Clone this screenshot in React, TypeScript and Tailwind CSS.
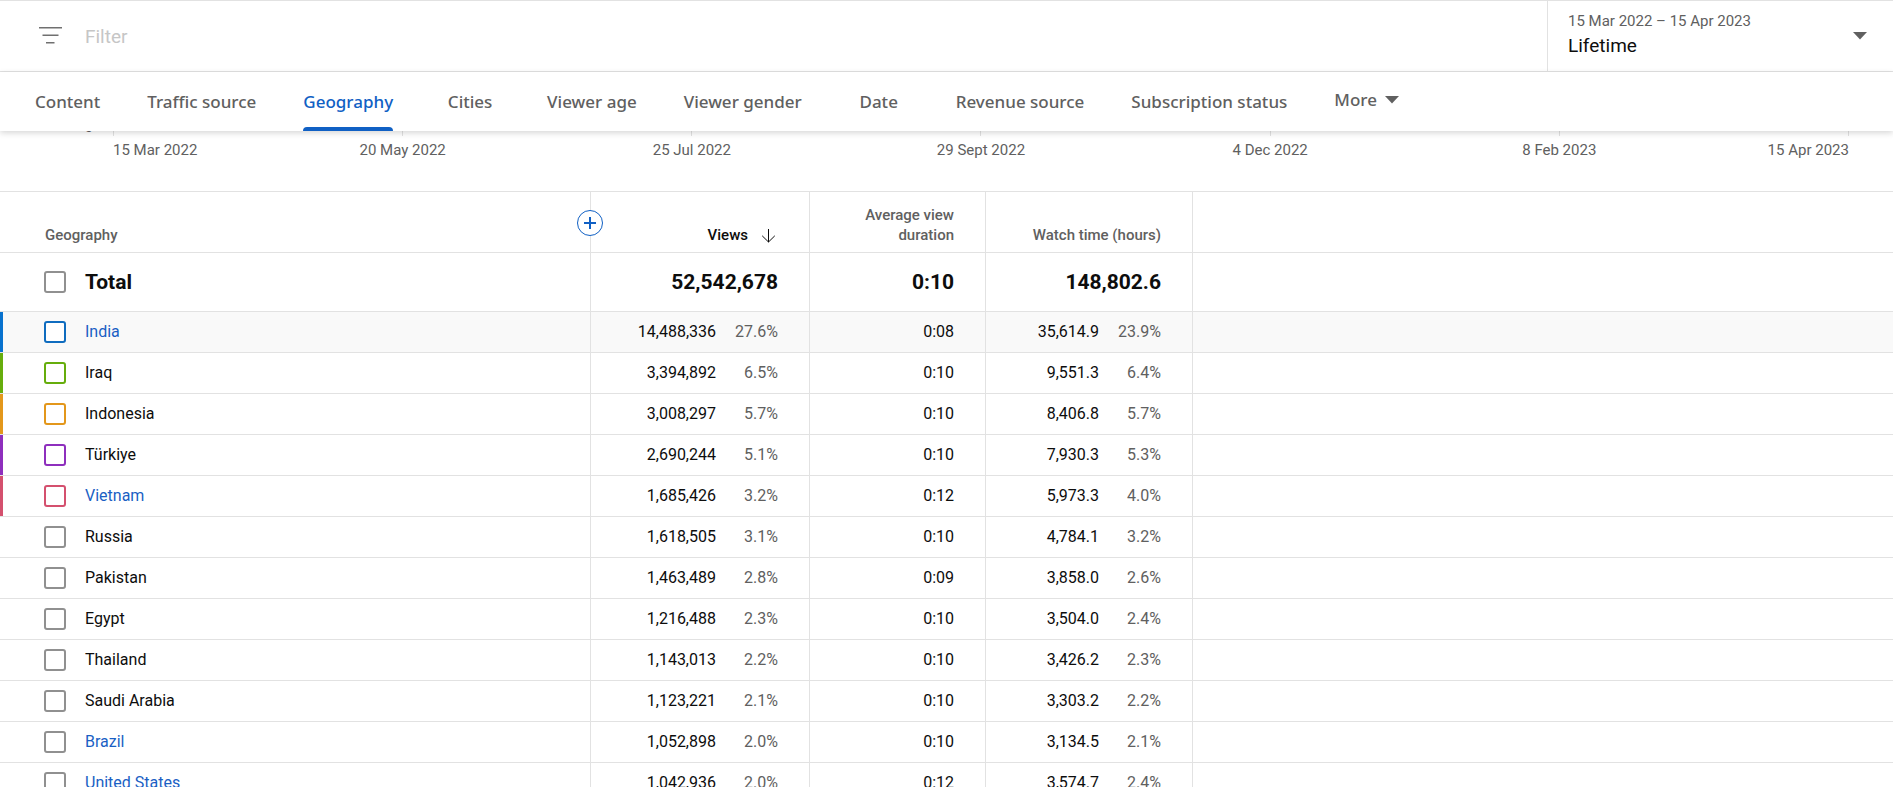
import clsx from "clsx";

const tabs = [
  "Content",
  "Traffic source",
  "Geography",
  "Cities",
  "Viewer age",
  "Viewer gender",
  "Date",
  "Revenue source",
  "Subscription status",
];

const axisDates = [
  "15 Mar 2022",
  "20 May 2022",
  "25 Jul 2022",
  "29 Sept 2022",
  "4 Dec 2022",
  "8 Feb 2023",
  "15 Apr 2023",
];

type Row = {
  name: string;
  views: string;
  viewsPct: string;
  duration: string;
  hours: string;
  hoursPct: string;
  link?: boolean;
  active?: boolean;
  bar?: string;
  box?: string;
};

const rows: Row[] = [
  { name: "India", views: "14,488,336", viewsPct: "27.6%", duration: "0:08", hours: "35,614.9", hoursPct: "23.9%", link: true, active: true, bar: "bg-[#0872ce]", box: "border-[#0f6cbf]" },
  { name: "Iraq", views: "3,394,892", viewsPct: "6.5%", duration: "0:10", hours: "9,551.3", hoursPct: "6.4%", bar: "bg-[#66ad0c]", box: "border-[#66ad0c]" },
  { name: "Indonesia", views: "3,008,297", viewsPct: "5.7%", duration: "0:10", hours: "8,406.8", hoursPct: "5.7%", bar: "bg-[#e3971b]", box: "border-[#e3971b]" },
  { name: "Türkiye", views: "2,690,244", viewsPct: "5.1%", duration: "0:10", hours: "7,930.3", hoursPct: "5.3%", bar: "bg-[#8e2fbd]", box: "border-[#8e2fbd]" },
  { name: "Vietnam", views: "1,685,426", viewsPct: "3.2%", duration: "0:12", hours: "5,973.3", hoursPct: "4.0%", link: true, bar: "bg-[#d4506e]", box: "border-[#d4506e]" },
  { name: "Russia", views: "1,618,505", viewsPct: "3.1%", duration: "0:10", hours: "4,784.1", hoursPct: "3.2%" },
  { name: "Pakistan", views: "1,463,489", viewsPct: "2.8%", duration: "0:09", hours: "3,858.0", hoursPct: "2.6%" },
  { name: "Egypt", views: "1,216,488", viewsPct: "2.3%", duration: "0:10", hours: "3,504.0", hoursPct: "2.4%" },
  { name: "Thailand", views: "1,143,013", viewsPct: "2.2%", duration: "0:10", hours: "3,426.2", hoursPct: "2.3%" },
  { name: "Saudi Arabia", views: "1,123,221", viewsPct: "2.1%", duration: "0:10", hours: "3,303.2", hoursPct: "2.2%" },
  { name: "Brazil", views: "1,052,898", viewsPct: "2.0%", duration: "0:10", hours: "3,134.5", hoursPct: "2.1%", link: true },
  { name: "United States", views: "1,042,936", viewsPct: "2.0%", duration: "0:12", hours: "3,574.7", hoursPct: "2.4%", link: true },
];

function Caret() {
  return (
    <svg className="w-3.5 h-2 shrink-0" viewBox="0 0 14 8" fill="#606060">
      <path d="M0 0h14L7 7.5z" />
    </svg>
  );
}

function Checkbox({ id, color }: { id: string; color?: string }) {
  return (
    <input
      id={id}
      type="checkbox"
      className={clsx(
        "appearance-none block w-[22px] h-[22px] shrink-0 border-2 rounded-[3px] bg-white",
        color ?? "border-[#909090]"
      )}
    />
  );
}

function FilterBar() {
  return (
    <div className="flex h-[72px] border-y border-[#e2e2e2]">
      <div className="flex flex-1 items-center pl-[39px]">
        <svg className="w-[23px] h-[18px] shrink-0" viewBox="0 0 23 18" fill="#707070">
          <path d="M0 0h23v1.6H0zM3.5 7.5h16v1.6h-16zM7 15h8.5v1.6H7z" />
        </svg>
        <input
          type="text"
          placeholder="Filter"
          aria-label="Filter"
          className="flex-1 ml-[23px] pt-0.5 text-[19px] leading-6 text-[#0d0d0d] placeholder:text-[#c6c6c6] outline-none"
        />
      </div>
      <button className="flex w-[346px] items-center justify-between border-l border-[#e2e2e2] pl-5 pr-[26px] text-left">
        <span className="pb-1">
          <span className="block text-[15px] leading-6 text-[#606060]">15 Mar 2022 – 15 Apr 2023</span>
          <span className="block text-[19px] leading-[26px] text-[#0d0d0d]">Lifetime</span>
        </span>
        <Caret />
      </button>
    </div>
  );
}

function TabBar() {
  return (
    <nav className="relative z-10 flex h-[59px] gap-[47px] bg-white pl-[35px] font-['Noto_Sans',sans-serif] text-[17px] font-medium text-[#606060] shadow-[0_2px_6px_rgba(0,0,0,0.16)]">
      {tabs.map((tab) => {
        const selected = tab === "Geography";
        return (
          <button
            key={tab}
            className={clsx(
              "flex flex-col items-center min-w-[60px] whitespace-nowrap pt-[18px] leading-6",
              selected && "text-[#1060c4]"
            )}
          >
            <span>{tab}</span>
            {selected && <span className="mt-auto h-1 w-full rounded-t bg-[#1060c4]" />}
          </button>
        );
      })}
      <button className="flex items-center gap-2 pb-1">
        More
        <Caret />
      </button>
    </nav>
  );
}

function ChartAxis() {
  return (
    <div className="flex h-[60px] text-[15px] text-[#606060]">
      <span className="-mt-3 w-[93px] text-right text-[15px] leading-4">0</span>
      <div className="ml-5 mr-11 flex flex-1 justify-between">
        {axisDates.map((date, i) => (
          <div
            key={date}
            className={clsx(
              "flex w-px flex-col whitespace-nowrap",
              i === 0 && "items-start",
              i > 0 && i < axisDates.length - 1 && "items-center",
              i === axisDates.length - 1 && "items-end"
            )}
          >
            <span className="h-[5px] w-px bg-[#e2e2e2]" />
            <span className="mt-1 leading-5">{date}</span>
          </div>
        ))}
      </div>
    </div>
  );
}

const cell = "border-r border-[#e2e2e2] pr-[31px] text-right";

function GeographyTable() {
  return (
    <table className="w-full table-fixed border-separate border-spacing-0 border-t border-[#e2e2e2] text-[16px] text-[#0d0d0d] [&_td]:border-b [&_th]:border-b [&_td]:border-[#e2e2e2] [&_th]:border-[#e2e2e2]">
      <colgroup>
        <col className="w-[591px]" />
        <col className="w-[219px]" />
        <col className="w-[176px]" />
        <col className="w-[207px]" />
        <col />
      </colgroup>
      <thead>
        <tr className="h-[61px] align-bottom text-[15px] leading-5 text-[#606060]">
          <th scope="col" className="relative border-r pb-[7px] pl-[45px] text-left font-medium">
            Geography
            <button
              aria-label="Add metric"
              className="absolute -right-[13px] top-[18px] flex h-[26px] w-[26px] items-center justify-center rounded-full border border-[#1060c4] bg-white"
            >
              <svg className="w-3 h-3" viewBox="0 0 12 12" fill="none" stroke="#1060c4" strokeWidth="2">
                <path d="M6 0v12M0 6h12" />
              </svg>
            </button>
          </th>
          <th scope="col" className={clsx(cell, "pb-[7px] font-medium")}>
            <button className="inline-flex items-center gap-[13px] text-[#0d0d0d]">
              Views
              <svg className="w-[15px] h-[15px] mr-[2px]" viewBox="0 0 15 15" fill="none" stroke="#0d0d0d">
                <path d="M7.5 1v13M1.2 7.8l6.3 6.2 6.3-6.2" />
              </svg>
            </button>
          </th>
          <th scope="col" className={clsx(cell, "pb-[7px] pl-10 font-medium")}>
            Average view duration
          </th>
          <th scope="col" className={clsx(cell, "pb-[7px] font-medium")}>
            Watch time (hours)
          </th>
          <td />
        </tr>
      </thead>
      <tbody>
        <tr className="h-[59px] text-[21px] leading-7 font-bold">
          <td className="border-r pl-11">
            <div className="flex items-center gap-[19px]">
              <Checkbox id="row-total" />
              <label htmlFor="row-total">Total</label>
            </div>
          </td>
          <td className={cell}>52,542,678</td>
          <td className={cell}>0:10</td>
          <td className={cell}>148,802.6</td>
          <td />
        </tr>
        {rows.map((row, i) => (
          <tr key={row.name} className={clsx("h-[41px]", row.active && "bg-[#f9f9f9]")}>
            <td className="border-r">
              <div className="flex h-10 items-center">
                <span className={clsx("mr-[41px] w-[3px] self-stretch", row.bar)} />
                <Checkbox id={`row-${i}`} color={row.box} />
                {row.link ? (
                  <a href="#" className="ml-[19px] text-[#1a5fc4]">
                    {row.name}
                  </a>
                ) : (
                  <label htmlFor={`row-${i}`} className="ml-[19px]">
                    {row.name}
                  </label>
                )}
              </div>
            </td>
            <td className={cell}>
              {row.views}
              <span className="inline-block w-[62px] text-[#606060]">{row.viewsPct}</span>
            </td>
            <td className={cell}>{row.duration}</td>
            <td className={cell}>
              {row.hours}
              <span className="inline-block w-[62px] text-[#606060]">{row.hoursPct}</span>
            </td>
            <td />
          </tr>
        ))}
      </tbody>
    </table>
  );
}

export default function App() {
  return (
    <div className="h-screen overflow-hidden bg-white font-[Roboto,sans-serif]">
      <FilterBar />
      <TabBar />
      <ChartAxis />
      <GeographyTable />
    </div>
  );
}
